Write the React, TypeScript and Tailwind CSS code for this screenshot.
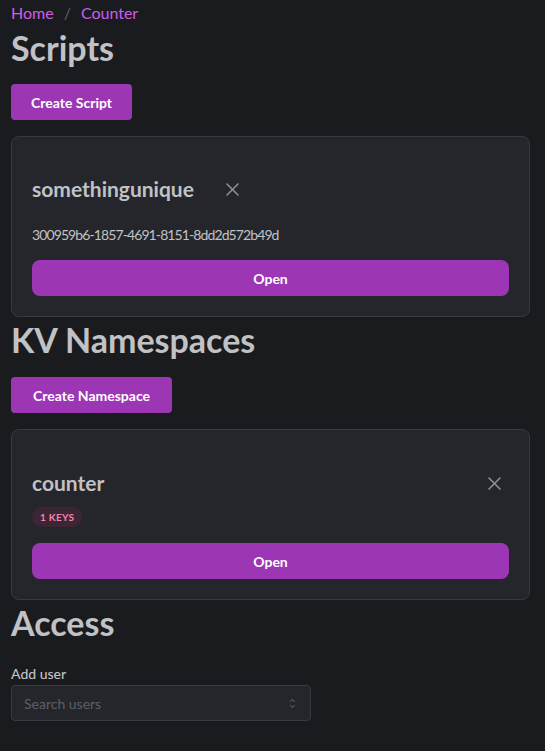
import React from "react";

const font = { fontFamily: "Lato, 'Noto Sans', sans-serif" };

function CloseIcon() {
  return (
    <svg width="13" height="13" viewBox="0 0 13 13" fill="none">
      <path d="M1 1L12 12M12 1L1 12" stroke="#909296" strokeWidth="1.5" strokeLinecap="round" />
    </svg>
  );
}

function Chevrons() {
  return (
    <svg width="15" height="15" viewBox="0 0 15 15" fill="none">
      <path
        d="M4.93 5.43a.45.45 0 0 0 .64.64L7.5 4.14l1.93 1.93a.45.45 0 1 0 .64-.64L7.82 3.18a.45.45 0 0 0-.64 0L4.93 5.43Zm5.14 4.14a.45.45 0 0 0-.64-.64L7.5 10.86 5.57 8.93a.45.45 0 1 0-.64.64l2.25 2.25a.45.45 0 0 0 .64 0l2.25-2.25Z"
        fill="#5c5f66"
      />
    </svg>
  );
}

export default function App() {
  return (
    <div className="min-h-[751px] w-full bg-[#1a1b1e] text-[#C1C2C5]" style={font}>
      <div className="pb-[30px] pl-[11px] pr-[15px]">
        <div className="flex h-[25px] items-center gap-[10px] text-[16px] leading-[25px]">
          <span className="text-[#cc5de8]">Home</span>
          <span className="text-[#5c5f66]">/</span>
          <span className="text-[#cc5de8]">Counter</span>
        </div>

        <h1 className="mt-[1px] text-[34px] font-bold leading-[44px]">Scripts</h1>
        <button className="mt-[14px] h-[36px] rounded-[4px] bg-[#9c36b5] px-[20px] text-[14px] font-bold text-white">
          Create Script
        </button>

        <div className="mt-[16px] rounded-[8px] border border-[#373A40] bg-[#25262b] px-[20px] pb-[20px] pt-[37px]">
          <div className="flex h-[30px] items-center gap-[32px]">
            <h3 className="text-[21px] font-bold leading-[30px]">somethingunique</h3>
            <CloseIcon />
          </div>
          <p className="mt-[20px] text-[14px] leading-[22px] tracking-[-0.9px]">
            300959b6-1857-4691-8151-8dd2d572b49d
          </p>
          <button className="mt-[14px] h-[36px] w-full rounded-[8px] bg-[#9c36b5] text-[14px] font-bold text-white">
            Open
          </button>
        </div>

        <h1 className="mt-[1px] text-[34px] font-bold leading-[44px]">KV Namespaces</h1>
        <button className="mt-[15px] h-[36px] rounded-[4px] bg-[#9c36b5] px-[22px] text-[14px] font-bold text-white">
          Create Namespace
        </button>

        <div className="mt-[16px] rounded-[8px] border border-[#373A40] bg-[#25262b] px-[20px] pb-[20px] pt-[38px]">
          <div className="flex h-[30px] items-center justify-between pr-[8px]">
            <h3 className="text-[21px] font-bold leading-[30px]">counter</h3>
            <CloseIcon />
          </div>
          <div className="mt-[9px] flex">
            <span className="flex h-[20px] items-center rounded-full bg-[#3c2633] px-[8px] text-[10px] font-bold uppercase tracking-[0.3px] text-[#f783ac]">
              1 keys
            </span>
          </div>
          <button className="mt-[16px] h-[36px] w-full rounded-[8px] bg-[#9c36b5] text-[14px] font-bold text-white">
            Open
          </button>
        </div>

        <h1 className="mt-[1px] text-[34px] font-bold leading-[44px]">Access</h1>
        <div className="mt-[18px] w-[300px]">
          <label className="block text-[14px] font-medium leading-[21px]">Add user</label>
          <div className="mt-[1px] flex h-[36px] items-center justify-between rounded-[4px] border border-[#373A40] bg-[#25262b] pl-[12px] pr-[10px]">
            <span className="text-[14px] text-[#5c5f66]">Search users</span>
            <Chevrons />
          </div>
        </div>
      </div>
    </div>
  );
}
